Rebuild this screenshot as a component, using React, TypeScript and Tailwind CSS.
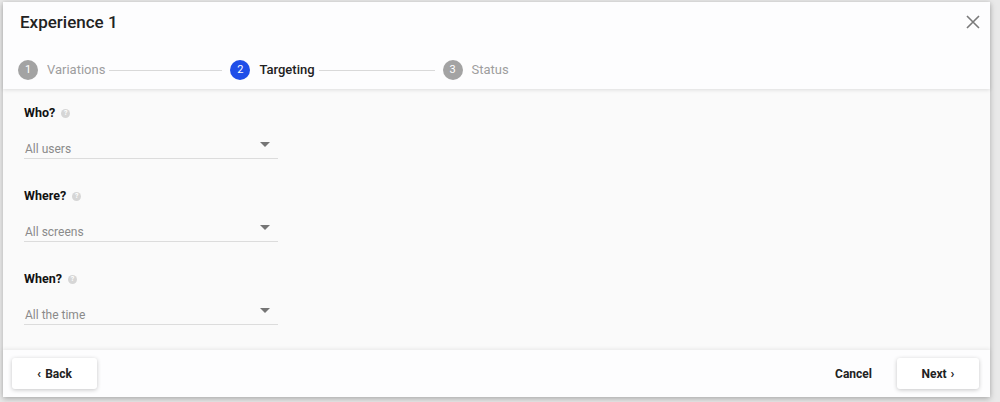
import React from "react";

function Help() {
  return (
    <span className="ml-[6px] inline-flex h-[9px] w-[9px] items-center justify-center rounded-full bg-[#d6d6d6] text-[7px] leading-none font-bold text-white">?</span>
  );
}

function Field({ label, value }: { label: string; value: string }) {
  return (
    <div className="flex flex-col">
      <div className="flex h-[16px] items-center text-[12.5px] font-bold text-[#111]">
        {label}
        <Help />
      </div>
      <div className="mt-[14px] flex h-[24px] w-[254px] items-end justify-between border-b border-[#dcdcdc] pb-[1px] pl-[1px]">
        <span className="text-[12px] leading-[16px] text-[#8a8a8a]">{value}</span>
        <svg width="10" height="5" viewBox="0 0 10 5" className="mb-[10px] mr-[8px]">
          <path d="M0 0 L10 0 L5 5 Z" fill="#757575" />
        </svg>
      </div>
    </div>
  );
}

function Step({ n, label, active }: { n: number; label: string; active?: boolean }) {
  return (
    <div className="flex items-center">
      <div
        className={
          active
            ? "flex h-[20px] w-[20px] items-center justify-center rounded-full bg-[#1f4ee8] text-[11px] text-white"
            : "flex h-[20px] w-[20px] items-center justify-center rounded-full bg-[#a3a3a3] text-[11px] text-white"
        }
      >
        {n}
      </div>
      <span
        className={
          active
            ? "ml-[9px] text-[13px] font-medium text-[#222]"
            : "ml-[9px] text-[13px] text-[#9e9e9e]"
        }
      >
        {label}
      </span>
    </div>
  );
}

export default function App() {
  return (
    <div
      className="h-[402px] w-[1000px] overflow-hidden bg-[#e9e9e9] pl-[3px] pt-[2px]"
      style={{ fontFamily: "Roboto, 'Noto Sans', sans-serif" }}
    >
      <div className="flex h-[395px] w-[987px] flex-col bg-[#fafafa] shadow-[0_2px_6px_rgba(0,0,0,0.25)]">
        <div className="relative z-10 h-[87px] shrink-0 bg-[#fdfdfe] shadow-[0_1px_4px_rgba(0,0,0,0.12)]">
          <div className="flex items-start justify-between pl-[17px] pr-[10px] pt-[8px]">
            <span className="text-[17px] leading-[24px] font-medium text-[#222]">Experience 1</span>
            <svg width="14" height="14" viewBox="0 0 14 14" className="mt-[5px]">
              <path d="M1 1 L13 13 M13 1 L1 13" stroke="#7a7a7a" strokeWidth="1.6" />
            </svg>
          </div>
          <div className="mt-[26px] flex items-center pl-[15px]">
            <Step n={1} label="Variations" />
            <div className="ml-[4px] mr-[8px] h-px w-[113px] bg-[#d9d9d9]" />
            <Step n={2} label="Targeting" active />
            <div className="ml-[4px] mr-[8px] h-px w-[116px] bg-[#d9d9d9]" />
            <Step n={3} label="Status" />
          </div>
        </div>
        <div className="flex flex-1 flex-col gap-[29px] pl-[21px] pt-[16px]">
          <Field label="Who?" value="All users" />
          <Field label="Where?" value="All screens" />
          <Field label="When?" value="All the time" />
        </div>
        <div className="relative z-10 flex h-[47px] shrink-0 items-start justify-between bg-[#fdfdfe] pl-[9px] pr-[11px] pt-[8px] shadow-[0_-1px_4px_rgba(0,0,0,0.08)]">
          <button className="flex h-[31px] w-[85px] items-center justify-center rounded-[3px] bg-white text-[12px] font-bold text-[#222] shadow-[0_1px_4px_rgba(0,0,0,0.22)]">
            <span className="mr-[4px] text-[13px]">‹</span>Back
          </button>
          <div className="flex items-center">
            <span className="mr-[25px] text-[12px] font-bold text-[#222]">Cancel</span>
            <button className="flex h-[31px] w-[82px] items-center justify-center rounded-[3px] bg-white text-[12px] font-bold text-[#222] shadow-[0_1px_4px_rgba(0,0,0,0.22)]">
              Next<span className="ml-[4px] text-[13px]">›</span>
            </button>
          </div>
        </div>
      </div>
    </div>
  );
}
